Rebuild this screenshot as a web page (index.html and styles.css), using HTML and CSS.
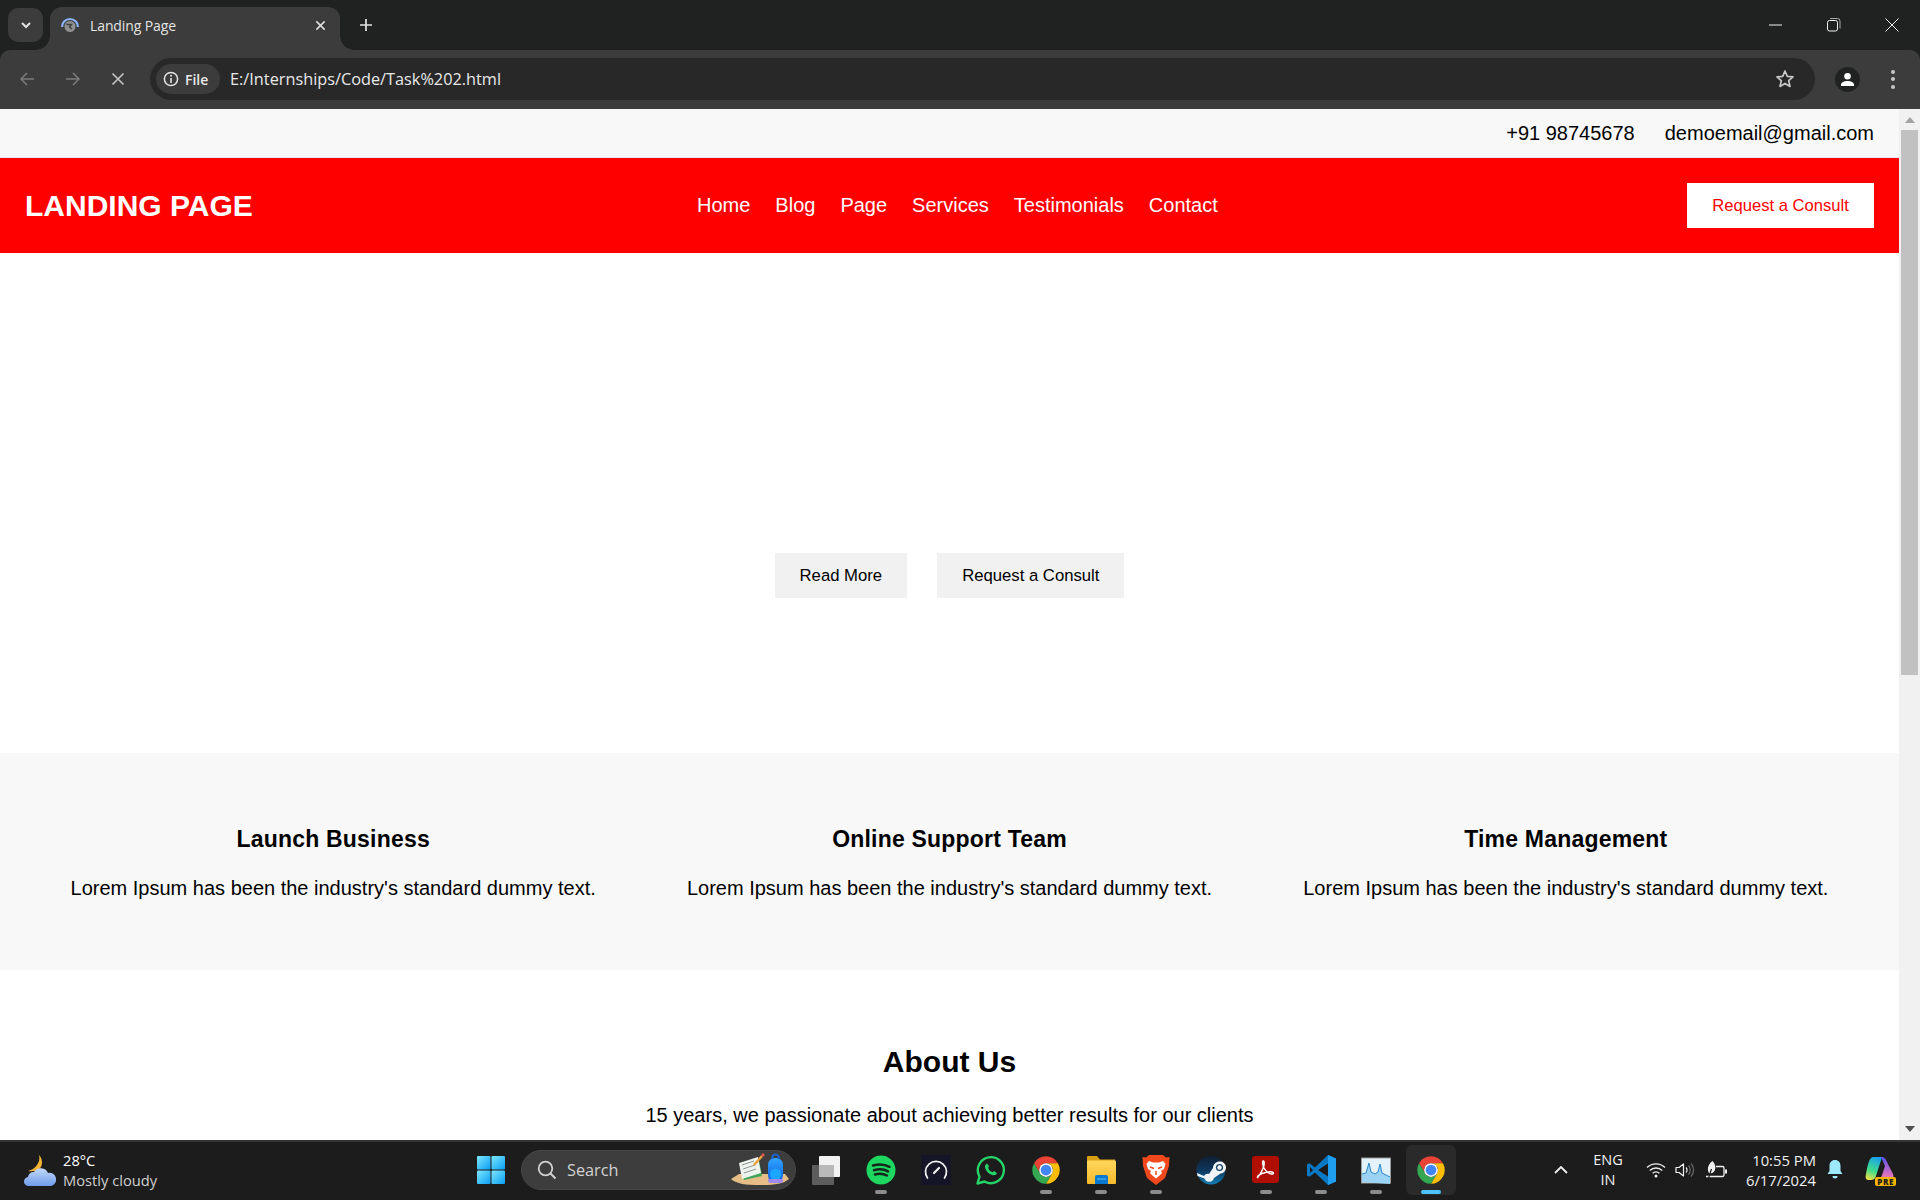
FILE: index.html
```html
<!DOCTYPE html>
<html lang="en">
<head>
<meta charset="utf-8">
<title>Landing Page</title>
<link rel="stylesheet" href="styles.css">
</head>
<body>
<svg class="defs" width="0" height="0" aria-hidden="true">
  <symbol id="chrome" viewBox="0 0 48 48">
    <path fill="#ea4335" d="M4.95 13A22 22 0 0 1 43.05 13H24A11 11 0 0 0 14.47 29.5Z"/>
    <path fill="#fbbc04" d="M43.05 13A22 22 0 0 1 24 46L33.53 29.5A11 11 0 0 0 24 13Z"/>
    <path fill="#34a853" d="M24 46A22 22 0 0 1 4.95 13L14.47 29.5A11 11 0 0 0 33.53 29.5Z"/>
    <circle cx="24" cy="24" r="11" fill="#fff"/>
    <circle cx="24" cy="24" r="8.6" fill="#4285f4"/>
  </symbol>
  <linearGradient id="win" x1="0" y1="0" x2="1" y2="1"><stop offset="0" stop-color="#7ce8ff"/><stop offset="1" stop-color="#0a9cf0"/></linearGradient>
  <linearGradient id="steam" x1="0.5" y1="0" x2="0.5" y2="1"><stop offset="0" stop-color="#111d2e"/><stop offset="0.55" stop-color="#0c3a63"/><stop offset="1" stop-color="#1280b4"/></linearGradient>
  <linearGradient id="cloud" x1="0" y1="0" x2="0" y2="1"><stop offset="0" stop-color="#c3d8fa"/><stop offset="1" stop-color="#6f9ceb"/></linearGradient>
  <linearGradient id="copA" x1="0.6" y1="0" x2="0.3" y2="1"><stop offset="0" stop-color="#1aa3ea"/><stop offset="0.6" stop-color="#3fdc8a"/><stop offset="1" stop-color="#e8e04a"/></linearGradient>
  <linearGradient id="copB" x1="0.5" y1="0" x2="0.5" y2="1"><stop offset="0" stop-color="#5a4ff0"/><stop offset="1" stop-color="#ff7ab0"/></linearGradient>
  <linearGradient id="file" x1="0" y1="0" x2="0" y2="1"><stop offset="0" stop-color="#ffd75e"/><stop offset="1" stop-color="#f6b92c"/></linearGradient>
  <linearGradient id="bag" x1="0" y1="0" x2="0" y2="1"><stop offset="0" stop-color="#2fa4ff"/><stop offset="1" stop-color="#0f5fe0"/></linearGradient>
</svg>

<header class="tabstrip">
  <button class="tabsearch" type="button">
    <svg class="ico12" viewBox="0 0 12 12"><path d="M2 4l4 4 4-4" fill="none" stroke="#e3e3e3" stroke-width="2"/></svg>
  </button>
  <div class="tab">
    <svg class="favicon" viewBox="0 0 20 16">
      <path d="M2 11A8 8 0 0 1 18 11" fill="none" stroke="#8ab4f8" stroke-width="2.2"/>
      <circle cx="10" cy="10.500" r="5.500" fill="#8f8f8f"/>
      <path d="M6.500 8.500h5l-2 2.500 2.500 2" fill="none" stroke="#3c3c3c" stroke-width="1.300"/>
    </svg>
    <span class="tabtitle">Landing Page</span>
    <svg class="tabclose" viewBox="0 0 12 12"><path d="M1.500 1.500l9 9M10.500 1.500l-9 9" stroke="#e3e3e3" stroke-width="1.600"/></svg>
  </div>
  <svg class="newtab" viewBox="0 0 14 14"><path d="M7 1v12M1 7h12" stroke="#e3e3e3" stroke-width="1.700"/></svg>
  <div class="winctrls">
    <svg class="winbtn" viewBox="0 0 14 14"><path d="M0 7h13" stroke="#f0f0f0" stroke-width="1"/></svg>
    <svg class="winbtn" viewBox="0 0 14 14"><rect x="0.500" y="2.500" width="10" height="10.500" rx="2" fill="none" stroke="#f0f0f0"/><path d="M3 .5h7.500a2.500 2.500 0 0 1 2.500 2.500v7.500" fill="none" stroke="#a8a8a8"/></svg>
    <svg class="winbtn" viewBox="0 0 14 14"><path d="M.5.500l13 13M13.500.500l-13 13" stroke="#f0f0f0" stroke-width="1"/></svg>
  </div>
</header>

<div class="toolbar">
  <svg class="navico" viewBox="0 0 16 16"><path d="M15 8H2M8 2L2 8l6 6" fill="none" stroke="#7b7b7b" stroke-width="1.500"/></svg>
  <svg class="navico" viewBox="0 0 16 16"><path d="M1 8h13M8 2l6 6-6 6" fill="none" stroke="#7b7b7b" stroke-width="1.500"/></svg>
  <svg class="navico" viewBox="0 0 16 16"><path d="M2.500 2.500l11 11M13.500 2.500l-11 11" stroke="#c7c7c7" stroke-width="1.600"/></svg>
  <div class="omnibox">
    <div class="chip">
      <svg class="infoico" viewBox="0 0 16 16"><circle cx="8" cy="8" r="6.600" fill="none" stroke="#e3e3e3" stroke-width="1.500"/><path d="M8 7v5" stroke="#e3e3e3" stroke-width="1.600"/><circle cx="8" cy="4.800" r="1" fill="#e3e3e3"/></svg>
      <span class="chiptext">File</span>
    </div>
    <span class="url">E:/Internships/Code/Task%202.html</span>
    <svg class="star" viewBox="0 0 20 20"><path d="M10 2l2.300 5.400 5.700.5-4.300 3.800 1.300 5.700L10 14.400l-5 3 1.300-5.700L2 7.900l5.700-.5z" fill="none" stroke="#c7c7c7" stroke-width="1.700" stroke-linejoin="round"/></svg>
  </div>
  <div class="avatar">
    <svg class="avatarico" viewBox="0 0 16 16"><circle cx="8" cy="4.500" r="3.500" fill="#fff"/><path d="M1 15v-1.500C1 11 4.500 9.500 8 9.500s7 1.500 7 4V15z" fill="#fff"/></svg>
  </div>
  <div class="dots"><i class="dot"></i><i class="dot"></i><i class="dot"></i></div>
</div>

<div class="viewport">
  <main class="page">
    <div class="topbar">
      <span>+91 98745678</span>
      <span>demoemail@gmail.com</span>
    </div>
    <nav class="navbar">
      <div class="logo">LANDING PAGE</div>
      <ul class="menu">
        <li>Home</li><li>Blog</li><li>Page</li><li>Services</li><li>Testimonials</li><li>Contact</li>
      </ul>
      <a class="cta">Request a Consult</a>
    </nav>
    <section class="hero">
      <a class="herobtn">Read More</a>
      <a class="herobtn">Request a Consult</a>
    </section>
    <section class="features">
      <article class="feature">
        <h3>Launch Business</h3>
        <p>Lorem Ipsum has been the industry's standard dummy text.</p>
      </article>
      <article class="feature">
        <h3>Online Support Team</h3>
        <p>Lorem Ipsum has been the industry's standard dummy text.</p>
      </article>
      <article class="feature">
        <h3>Time Management</h3>
        <p>Lorem Ipsum has been the industry's standard dummy text.</p>
      </article>
    </section>
    <section class="about">
      <h2>About Us</h2>
      <p>15 years, we passionate about achieving better results for our clients</p>
    </section>
  </main>
  <aside class="scrollbar">
    <svg class="arrow" viewBox="0 0 10 6"><path d="M5 0l5 6H0z" fill="#a3a3a3"/></svg>
    <div class="thumb"></div>
    <svg class="arrow arrow-down" viewBox="0 0 10 6"><path d="M5 6L0 0h10z" fill="#505050"/></svg>
  </aside>
</div>

<footer class="taskbar">
  <div class="weather">
    <svg class="weatherico" viewBox="0 0 32 33">
      <path d="M15 1c3 3 4 8 2 12-2 3-7 5-13 4 4-1 7-3 9-6 2-3 3-6 2-10z" fill="#f5b335"/>
      <path d="M5 32a4.500 4.500 0 0 1-1-9 5.500 5.500 0 0 1 6-5 8 8 0 0 1 14 1 6.500 6.500 0 0 1 3 13z" fill="url(#cloud)"/>
    </svg>
    <div class="weathertext">
      <span class="temp">28°C</span>
      <span class="cond">Mostly cloudy</span>
    </div>
  </div>
  <div class="apps">
    <div class="slot">
      <svg class="appico" viewBox="0 0 30 30"><rect x="1" y="1" width="13.500" height="13.500" rx="1" fill="url(#win)"/><rect x="15.500" y="1" width="13.500" height="13.500" rx="1" fill="url(#win)"/><rect x="1" y="15.500" width="13.500" height="13.500" rx="1" fill="url(#win)"/><rect x="15.500" y="15.500" width="13.500" height="13.500" rx="1" fill="url(#win)"/></svg>
    </div>
    <div class="searchbox">
      <svg class="searchico" viewBox="0 0 20 20"><circle cx="8.500" cy="8.500" r="6.800" fill="none" stroke="#d2d2d2" stroke-width="1.800"/><path d="M13.500 13.500l5 5" stroke="#d2d2d2" stroke-width="2"/></svg>
      <span class="searchtext">Search</span>
      <svg class="searchart" viewBox="0 0 58 34">
        <path d="M0 27l8-5h46l4 5c-6 5-14 6-29 6S6 32 0 27z" fill="#e6bd87"/>
        <path d="M9 13l19-5 3 16-18 4z" fill="#3fa55b"/>
        <path d="M8 11l19-6 3 16-19 6z" fill="#eef3ee"/>
        <path d="M11 13l12-4M12 17l12-4M13 21l12-4" stroke="#8a9a92" stroke-width="1"/>
        <path d="M23 13L31 4" stroke="#f0a23a" stroke-width="2.500"/>
        <path d="M31 4l2-2" stroke="#e2574c" stroke-width="2.500"/>
        <rect x="37" y="6" width="15" height="24" rx="6.500" fill="url(#bag)"/>
        <path d="M41 7c0-6 7-6 7 0" fill="none" stroke="#1d63c9" stroke-width="2"/>
        <rect x="39" y="17" width="11" height="11" rx="5" fill="#1aa7ff"/>
        <path d="M37 27h15v2c0 1-1 2-3 2h-9c-2 0-3-1-3-2z" fill="#a08af0"/>
      </svg>
    </div>
    <div class="slot">
      <svg class="appico" viewBox="0 0 30 30"><rect x="1" y="10" width="22" height="20" rx="1" fill="#5d5d5d"/><rect x="8" y="1" width="21" height="21" rx="1" fill="#f2f2f2"/><rect x="8" y="10" width="15" height="12" fill="#b9b9b9"/></svg>
    </div>
    <div class="slot">
      <svg class="appico" viewBox="0 0 30 30"><circle cx="15" cy="15" r="14.500" fill="#1ed760"/><path d="M7 10.500c6-1.800 12-1.200 16.500 1.300M8 15.200c5-1.400 10-1 14 1.200M9 19.500c4-1 8.500-.7 12 1" fill="none" stroke="#14251a" stroke-width="2.500" stroke-linecap="round"/></svg>
      <i class="pip"></i>
    </div>
    <div class="slot">
      <svg class="appico" viewBox="0 0 30 30"><rect width="30" height="30" fill="#141627"/><path d="M6.500 23a10.500 10.500 0 1 1 17 0" fill="none" stroke="#f3f3f3" stroke-width="1.700" stroke-linecap="round"/><path d="M13 18l5-5" stroke="#f3f3f3" stroke-width="2.200" stroke-linecap="round"/></svg>
    </div>
    <div class="slot">
      <svg class="appico" viewBox="0 0 30 30"><path d="M1.500 28.500l2-7a13 13 0 1 1 5 5z" fill="none" stroke="#25d366" stroke-width="2.400" stroke-linejoin="round"/><path d="M11 8.500c-2 1-2.500 3-1.500 5.500 1.300 3 3.500 5 6.500 6 2.500.8 4.300-.2 5-2l-3-2-1.500 1.300c-2-.7-3.500-2.300-4.300-4.300L13 11z" fill="#25d366"/></svg>
    </div>
    <div class="slot">
      <svg class="appico"><use href="#chrome"/></svg>
      <i class="pip"></i>
    </div>
    <div class="slot">
      <svg class="appico" viewBox="0 0 30 30"><path d="M1 2a1 1 0 0 1 1-1h9l3 3.500h15V10H1z" fill="#d9a013"/><rect x="1" y="5.500" width="29" height="23.500" rx="1" fill="url(#file)"/><path d="M9 29v-7a2 2 0 0 1 2-2h9a2 2 0 0 1 2 2v7z" fill="#0a78cf"/><path d="M11 24h9" stroke="#4eb4ef" stroke-width="1.200"/></svg>
      <i class="pip"></i>
    </div>
    <div class="slot">
      <svg class="appico" viewBox="0 0 30 30"><path d="M8 0h14l3 2.500 3.500-.5-.5 9-4 12-9 7-9-7L2 11l-.5-9L5 2.500z" fill="#f1491d"/><path d="M8 6l4 1.500h6L22 6l2.500 3-1.500 5-3 2 1 2-3 3-3 2.500L12 21l-3-3 1-2-3-2-1.500-5z" fill="#fff"/><path d="M9 12l4 1.500M21 12l-4 1.500M15 16v4" stroke="#f1491d" stroke-width="1.500"/></svg>
      <i class="pip"></i>
    </div>
    <div class="slot">
      <svg class="appico" viewBox="0 0 30 30"><circle cx="15" cy="15" r="14.500" fill="url(#steam)"/><path d="M1 18l7 3c1-1.500 3-2.500 5-2l4-6c0-4 3.500-6.500 6.500-6.500a6 6 0 0 1 1 12l-6.500 4.500a5 5 0 0 1-9.500.5L1.500 21z" fill="#f1f4f6"/><circle cx="23.500" cy="12.500" r="3.600" fill="#1c4568"/><circle cx="23.500" cy="12.500" r="2.200" fill="#f1f4f6"/></svg>
    </div>
    <div class="slot">
      <svg class="appico" viewBox="0 0 30 30"><rect x="1" y="1" width="27" height="27" rx="3" fill="#af0e00"/><path d="M6 22.500c2-1 4-4.500 6-9 1-3 1.500-7 .5-7.500-1.500-.5-1 4 .5 7 2 3.500 5 6 8 6 2 0 2-1.500 0-2-3-.5-7 .5-10 1.500-3 1.500-5 3-4.500 4z" fill="none" stroke="#fff" stroke-width="1.500"/></svg>
      <i class="pip"></i>
    </div>
    <div class="slot">
      <svg class="appico" viewBox="0 0 30 30"><path d="M22 0l8 3.500v23L22 30 9 17.500l-5.500 4.300L1 20.500v-11l2.500-1.300L9 12.500z" fill="#0b78c6"/><path d="M22 0l8 3.500v23L22 30z" fill="#1f9ef0"/><path d="M22 8.500L12 15l10 6.500z" fill="#1a1a1a"/><path d="M4 12v6l3-3z" fill="#1a1a1a"/></svg>
      <i class="pip"></i>
    </div>
    <div class="slot">
      <svg class="appico" viewBox="0 0 30 30"><rect x="0.500" y="3" width="29" height="25" fill="#e4f2fb" stroke="#9a9a9a"/><path d="M1 27V19l4-1 3-10 2 9 4 2 3-2 2-8 2 9 4 2 4 2v7z" fill="#9bd3f4"/><path d="M1 19l4-1 3-10 2 9 4 2 3-2 2-8 2 9 4 2 4 2" fill="none" stroke="#2a86d4" stroke-width="1"/></svg>
      <i class="pip"></i>
    </div>
    <div class="slot slot-active">
      <svg class="appico"><use href="#chrome"/></svg>
      <i class="pip pip-active"></i>
    </div>
  </div>
  <div class="tray">
    <svg class="chevron" viewBox="0 0 14 8"><path d="M1 7l6-6 6 6" fill="none" stroke="#f0f0f0" stroke-width="1.800"/></svg>
    <div class="lang"><span>ENG</span><span>IN</span></div>
    <svg class="wifi" viewBox="0 0 20 16"><path d="M1 5.500a13 13 0 0 1 18 0M3.800 8.500a9 9 0 0 1 12.400 0M6.600 11.300a5 5 0 0 1 6.800 0" fill="none" stroke="#f0f0f0" stroke-width="1.300"/><circle cx="10" cy="14" r="1.500" fill="#f0f0f0"/></svg>
    <svg class="speaker" viewBox="0 0 20 16"><path d="M1 5.500h3L8.500 2v12L4 10.500H1z" fill="none" stroke="#f0f0f0" stroke-width="1.200" stroke-linejoin="round"/><path d="M11 5.500a3.500 3.500 0 0 1 0 5" fill="none" stroke="#f0f0f0" stroke-width="1.200"/><path d="M13.500 3.500a6.500 6.500 0 0 1 0 9M16 1.500a9.500 9.500 0 0 1 0 13" fill="none" stroke="#6a6a6a" stroke-width="1.200"/></svg>
    <svg class="battery" viewBox="0 0 22 18"><path d="M11 5.500h6.500a1.500 1.500 0 0 1 1.500 1.500v7a1.500 1.500 0 0 1-1.500 1.500H1" fill="none" stroke="#f0f0f0" stroke-width="1.300"/><rect x="20" y="8.500" width="2" height="4" fill="#f0f0f0"/><path d="M7.500 0c2.500 2.500 3.500 6 2.500 9-1 2.500-3 3.500-5.500 3.500C2 10 2 4 7.500 0z" fill="#f0f0f0"/><path d="M3.500 17l3-9" stroke="#1c1c1c" stroke-width="1.200"/></svg>
    <div class="clock"><span>10:55 PM</span><span>6/17/2024</span></div>
    <svg class="bell" viewBox="0 0 16 20"><path d="M8 0c3.500 0 5.500 2.500 5.500 6v5l2 3H.5l2-3V6C2.500 2.500 4.500 0 8 0z" fill="#9de8fb"/><path d="M5.500 16h5a2.500 2.500 0 0 1-5 0z" fill="#9de8fb"/></svg>
    <div class="copilot">
      <svg class="copilotico" viewBox="0 0 30 28">
        <path d="M8 1h9L11 20c-1 3-3 4-5 4H4c-3 0-4-2-3-6 1-6 3-17 7-17z" fill="url(#copA)"/>
        <path d="M16 1c2-.5 4 .5 5 3l7 14c1.500 4-1 6-4 6H12c3 0 4-2 5-5l3-9z" fill="url(#copB)"/>
      </svg>
      <span class="prebadge">PRE</span>
    </div>
  </div>
</footer>
</body>
</html>
```
FILE: styles.css
```css
* { box-sizing: border-box; }
html, body { margin: 0; height: 1200px; overflow: hidden; }
body { display: flex; flex-direction: column; width: 1920px; font-family: "Liberation Sans", Arial, sans-serif; background: #202221; }
.defs { position: absolute; }
svg { display: block; flex: none; }

/* browser tab strip */
.tabstrip { height: 50px; flex: none; display: flex; align-items: flex-end; background: #202221; position: relative; }
.tabsearch { width: 35px; height: 34px; margin: 0 7px 8px 8px; padding: 0; border: 0; border-radius: 10px; background: #3c3c3c; display: flex; align-items: center; justify-content: center; }
.ico12 { width: 12px; height: 12px; }
.tab { position: relative; width: 290px; height: 43px; background: #3c3c3c; border-radius: 12px 12px 0 0; display: flex; align-items: center; padding: 0 14px 6px 10px; }
.tab::before, .tab::after { content: ""; position: absolute; bottom: 0; width: 14px; height: 14px; }
.tab::before { left: -14px; background: radial-gradient(circle at 0 0, transparent 13.5px, #3c3c3c 14px); }
.tab::after { right: -14px; background: radial-gradient(circle at 100% 0, transparent 13.5px, #3c3c3c 14px); }
.favicon { width: 20px; height: 16px; margin-top: -4px; }
.tabtitle { margin-left: 10px; font-family: "Open Sans", sans-serif; font-size: 14px; letter-spacing: -.1px; color: #e3e3e3; flex: 1; }
.tabclose { width: 11px; height: 11px; }
.newtab { width: 14px; height: 14px; margin: 0 0 18px 19px; }
.winctrls { margin-left: auto; align-self: flex-start; margin-top: 18px; display: flex; gap: 44px; padding-right: 21px; }
.winbtn { width: 14px; height: 14px; }

/* browser toolbar */
.toolbar { height: 59px; flex: none; background: #3c3c3c; border-radius: 10px 10px 0 0; display: flex; align-items: center; padding: 0 0 1px 19px; }
.navico { width: 16px; height: 16px; margin-right: 30px; }
.navico:nth-child(3) { margin-right: 24px; margin-left: -1px; }
.omnibox { width: 1665px; height: 42px; background: #282828; border-radius: 21px; display: flex; align-items: center; padding: 0 20px 0 6px; }
.chip { width: 64px; height: 30px; border-radius: 15px; background: #3c3c3c; display: flex; align-items: center; padding-left: 7px; gap: 6px; }
.infoico { width: 16px; height: 16px; }
.chiptext { font-family: "Open Sans", sans-serif; font-weight: 600; font-size: 14px; color: #e8e8e8; }
.url { margin-left: 10px; font-family: "Open Sans", sans-serif; font-size: 16.3px; color: #e8e8e8; }
.star { width: 20px; height: 20px; margin-left: auto; }
.avatar { width: 25px; height: 25px; border-radius: 50%; background: #202221; margin-left: 20px; display: flex; align-items: center; justify-content: center; }
.avatarico { width: 15px; height: 15px; }
.dots { margin-left: 31px; display: flex; flex-direction: column; gap: 3.500px; }
.dot { display: block; width: 4px; height: 4px; border-radius: 50%; background: #c7c7c7; }

/* page viewport */
.viewport { height: 1031px; flex: none; display: flex; background: #fff; }
.page { flex: 1; min-width: 0; overflow: hidden; color: #000; background: #fff; }
.topbar { height: 49px; background: #f8f8f8; border-bottom: 1px solid #e6e6e6; display: flex; align-items: center; justify-content: flex-end; gap: 30px; padding: 0 25px; font-size: 20px; }
.navbar { height: 95px; background: #f00; color: #fff; display: flex; align-items: center; padding: 0 25px; position: relative; }
.logo { font-size: 30px; font-weight: 700; width: 672px; }
.menu { list-style: none; margin: 0; padding: 0; display: flex; gap: 25px; font-size: 20px; }
.cta { margin-left: auto; width: 187px; height: 45px; background: #fff; color: #f00; font-size: 16.6px; display: flex; align-items: center; justify-content: center; }
.hero { height: 500px; background: #fff; display: flex; justify-content: center; gap: 30px; padding-top: 300px; }
.herobtn { height: 45px; padding: 0 25px; background: #f1f1f1; color: #000; font-size: 16.7px; display: flex; align-items: center; }
.features { height: 217px; background: #f8f8f8; display: grid; grid-template-columns: repeat(3, 1fr); padding: 0 25px; }
.feature { text-align: center; padding-top: 72px; }
.feature h3 { margin: 0; font-size: 23px; letter-spacing: .2px; line-height: 28px; font-weight: 700; }
.feature p { margin: 24px 0 0; font-size: 20px; line-height: 23px; }
.about { text-align: center; padding-top: 73px; }
.about h2 { margin: 0; font-size: 30px; line-height: 37px; font-weight: 700; }
.about p { margin: 24px 0 0; font-size: 20px; line-height: 23px; }

/* scrollbar */
.scrollbar { width: 21px; flex: none; background: #f1f1f1; display: flex; flex-direction: column; align-items: center; position: relative; }
.arrow { width: 10px; height: 6px; margin-top: 8px; }
.thumb { width: 17px; height: 545px; margin-top: 7px; background: #c1c1c1; }
.arrow-down { margin-top: auto; margin-bottom: 8px; }

/* taskbar */
.taskbar { height: 60px; flex: none; background: #1c1c1c; border-top: 2px solid #353535; padding-bottom: 2px; display: flex; align-items: center; color: #fff; font-family: "Open Sans", sans-serif; }
.weather { width: 466px; flex: none; display: flex; align-items: center; padding-left: 24px; }
.weatherico { width: 32px; height: 33px; }
.weathertext { margin-left: 7px; display: flex; flex-direction: column; font-size: 14.700px; line-height: 20px; }
.temp { color: #fff; }
.cond { color: #cfcfcf; }
.apps { display: flex; align-items: center; gap: 5px; }
.slot { width: 50px; height: 50px; border-radius: 6px; display: flex; align-items: center; justify-content: center; position: relative; }
.slot-active { background: #2a2a2a; }
.appico { width: 30px; height: 30px; }
.pip { position: absolute; left: 19px; bottom: 1px; width: 12px; height: 4px; border-radius: 2px; background: #8c8c8c; }
.pip-active { left: 15px; width: 20px; background: #4cc2ff; }
.searchbox { width: 275px; height: 40px; border-radius: 20px; background: #3d3d3d; border: 1px solid #474747; display: flex; align-items: center; padding-left: 15px; position: relative; }
.searchico { width: 20px; height: 20px; }
.searchtext { margin-left: 10px; font-size: 16.300px; color: #d2d2d2; }
.searchart { width: 58px; height: 34px; margin-left: auto; margin-right: 6px; margin-top: -3px; }
.tray { margin-left: auto; display: flex; align-items: center; padding-right: 25px; position: relative; }
.chevron { width: 14px; height: 8px; margin-right: 22px; }
.lang { width: 36px; display: flex; flex-direction: column; align-items: center; font-size: 14.500px; line-height: 20px; color: #f0f0f0; margin-right: 20px; }
.wifi { width: 20px; height: 16px; margin-right: 9px; }
.speaker { width: 20px; height: 16px; margin-right: 10px; }
.battery { width: 22px; height: 18px; margin-right: 5px; }
.clock { width: 84px; display: flex; flex-direction: column; align-items: flex-end; font-size: 14.800px; line-height: 20px; color: #f0f0f0; }
.bell { width: 16px; height: 20px; margin-left: 11px; }
.copilot { width: 30px; height: 28px; margin-left: 22px; position: relative; }
.copilotico { width: 30px; height: 28px; }
.prebadge { position: absolute; right: -1px; bottom: -2px; padding: 0 2px; border-radius: 2px; background: #f7b500; color: #1c1c1c; font-size: 8px; line-height: 9px; font-weight: 800; letter-spacing: .6px; }
```
